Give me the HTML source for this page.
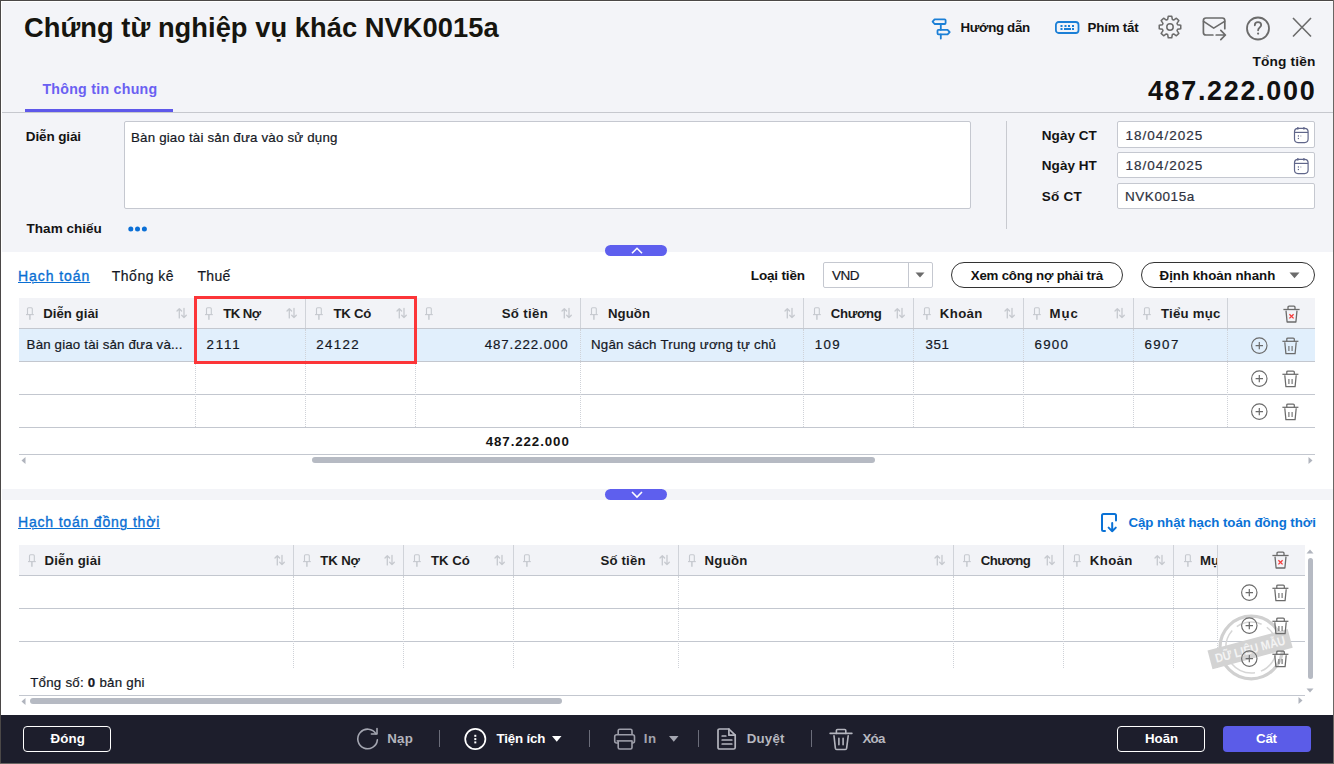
<!DOCTYPE html>
<html><head><meta charset="utf-8">
<style>
*{box-sizing:border-box;margin:0;padding:0}
html,body{width:1334px;height:764px;overflow:hidden;background:#fff;font-family:"Liberation Sans",sans-serif;color:#1f1f1f}
.a{position:absolute;white-space:nowrap;line-height:1}
svg.a{overflow:visible}
.u{text-decoration:underline;text-underline-offset:1px;text-decoration-thickness:1px;-webkit-text-stroke:0.35px #0a6fd3}
</style></head><body>

<div class="a" style="left:0px;top:0px;width:1334px;height:252px;background:#f3f4f8;"></div>
<div class="a " id="t0" style="top:13.89px;font-size:27.3px;color:#16150f;letter-spacing:0.039px;font-weight:bold;left:24.00px;">Chứng từ nghiệp vụ khác NVK0015a</div>
<div class="a " id="t1" style="top:81.98px;font-size:14.2px;color:#6a60f2;letter-spacing:0.265px;font-weight:bold;left:42.40px;">Thông tin chung</div>
<div class="a" style="left:25px;top:109px;width:148px;height:3px;background:#5e58ea;"></div>
<div class="a" style="left:0px;top:112px;width:1334px;height:1px;background:#c6c8ce;"></div>
<svg class="a" style="left:930px;top:17px;" width="22" height="23" viewBox="0 0 22 23" fill="none"><g stroke="#1b7fd6" stroke-width="1.8" stroke-linejoin="round" stroke-linecap="round" fill="none">
<path d="M2.6 4.65 L4.6 2.3 H14.6 Q15.6 2.3 15.6 3.3 V6 Q15.6 7 14.6 7 H4.6 Z"/>
<path d="M8.5 12.8 H17.6 L19.7 15.05 L17.6 17.3 H8.5 Q7.5 17.3 7.5 16.3 V13.8 Q7.5 12.8 8.5 12.8 Z"/>
<path d="M10.8 7 V12.8 M10.8 17.3 V21.6"/></g></svg>
<div class="a " id="t2" style="top:20.74px;font-size:13.3px;color:#131313;letter-spacing:-0.350px;font-weight:bold;left:960.60px;">Hướng dẫn</div>
<svg class="a" style="left:1054px;top:20px;" width="27" height="15" viewBox="0 0 27 15" fill="none"><rect x="1.9" y="2" width="22.6" height="11" rx="2.8" stroke="#1b7fd6" stroke-width="1.8"/>
<g fill="#1b7fd6"><rect x="6.5" y="5" width="2" height="2"/><rect x="10.5" y="5" width="2" height="2"/><rect x="14" y="5" width="2" height="2"/><rect x="18" y="5" width="2" height="2"/>
<rect x="6.5" y="8" width="2" height="2"/><rect x="10" y="8" width="7" height="2"/><rect x="18" y="8" width="2" height="2"/></g></svg>
<div class="a " id="t3" style="top:20.74px;font-size:13.3px;color:#131313;letter-spacing:-0.199px;font-weight:bold;left:1087.60px;">Phím tắt</div>
<svg class="a" style="left:1158px;top:15.3px;" width="24" height="24" viewBox="0 0 24 24" fill="none"><polygon points="10.26,1.24 13.74,1.24 14.33,4.45 15.69,5.01 18.38,3.16 20.84,5.62 18.99,8.31 19.55,9.67 22.76,10.26 22.76,13.74 19.55,14.33 18.99,15.69 20.84,18.38 18.38,20.84 15.69,18.99 14.33,19.55 13.74,22.76 10.26,22.76 9.67,19.55 8.31,18.99 5.62,20.84 3.16,18.38 5.01,15.69 4.45,14.33 1.24,13.74 1.24,10.26 4.45,9.67 5.01,8.31 3.16,5.62 5.62,3.16 8.31,5.01 9.67,4.45" stroke="#6b6b6b" stroke-width="1.5" stroke-linejoin="round"/>
<circle cx="12" cy="12" r="3.2" stroke="#6b6b6b" stroke-width="1.5"/></svg>
<svg class="a" style="left:1202px;top:16px;" width="26" height="26" viewBox="0 0 26 26" fill="none"><g stroke="#6b6b6b" stroke-width="1.7" stroke-linecap="round" stroke-linejoin="round" fill="none">
<path d="M10.9 19 H4 Q1.4 19 1.4 16.5 V4.5 Q1.4 2 4 2 H20.3 Q22.8 2 22.8 4.5 V12.7"/>
<path d="M1.6 5.4 L11.7 12.1 L22.6 5.4"/>
<path d="M14.2 19 H23.4 M18.8 14.4 L23.4 19 L18.8 23.6"/></g></svg>
<svg class="a" style="left:1246px;top:16px;" width="25" height="25" viewBox="0 0 25 25" fill="none"><circle cx="12" cy="12.5" r="11" stroke="#6b6b6b" stroke-width="1.8"/>
<path d="M8.8 9.3 C8.8 7.3 10.3 6.2 12 6.2 C13.8 6.2 15.2 7.4 15.2 9.1 C15.2 11.3 12.1 11.6 12.1 14.3" stroke="#6b6b6b" stroke-width="1.8" stroke-linecap="round"/>
<circle cx="12.1" cy="17.6" r="1.1" fill="#6b6b6b"/></svg>
<svg class="a" style="left:1292px;top:17px;" width="20" height="21" viewBox="0 0 20 21" fill="none"><path d="M1 1 L19 19.5 M19 1 L1 19.5" stroke="#6b6b6b" stroke-width="1.6"/></svg>
<div class="a " id="t4" style="top:55.40px;font-size:13.7px;color:#131313;letter-spacing:0.164px;font-weight:bold;right:18.56px;">Tổng tiền</div>
<div class="a " id="t5" style="top:78.14px;font-size:27px;color:#111;letter-spacing:1.660px;font-weight:bold;right:17.66px;">487.222.000</div>
<div class="a " id="t6" style="top:129.57px;font-size:13.5px;color:#131313;letter-spacing:-0.125px;font-weight:bold;left:25.80px;">Diễn giải</div>
<div class="a" style="left:124px;top:121px;width:847px;height:88px;background:#fff;border:1px solid #c5c8d0;border-radius:2px"></div>
<div class="a " id="t7" style="top:130.74px;font-size:13.3px;color:#141824;letter-spacing:0.194px;-webkit-text-stroke:0.2px #141824;left:131.00px;">Bàn giao tài sản đưa vào sử dụng</div>
<div class="a " id="t8" style="top:221.57px;font-size:13.5px;color:#131313;letter-spacing:0.012px;font-weight:bold;left:26.60px;">Tham chiếu</div>
<svg class="a" style="left:127px;top:226px;" width="22" height="6" viewBox="0 0 22 6" fill="none"><g fill="#0a6fd6"><circle cx="3.8" cy="3.1" r="2.5"/><circle cx="10.5" cy="3.1" r="2.5"/><circle cx="17.4" cy="3.1" r="2.5"/></g></svg>
<div class="a" style="left:1006px;top:121px;width:1px;height:108px;background:#c8cad0;"></div>
<div class="a " id="t9" style="top:128.57px;font-size:13.5px;color:#131313;letter-spacing:0.051px;font-weight:bold;left:1041.80px;">Ngày CT</div>
<div class="a " id="t10" style="top:158.57px;font-size:13.5px;color:#131313;letter-spacing:0.051px;font-weight:bold;left:1041.80px;">Ngày HT</div>
<div class="a " id="t11" style="top:189.57px;font-size:13.5px;color:#131313;letter-spacing:0.225px;font-weight:bold;left:1041.80px;">Số CT</div>
<div class="a" style="left:1117px;top:121px;width:198px;height:27px;background:#fff;border:1px solid #c5c8d0;border-radius:2px"></div>
<div class="a" style="left:1117px;top:152px;width:198px;height:26px;background:#fff;border:1px solid #c5c8d0;border-radius:2px"></div>
<div class="a" style="left:1117px;top:183px;width:198px;height:26px;background:#fff;border:1px solid #c5c8d0;border-radius:2px"></div>
<div class="a " id="t12" style="top:128.57px;font-size:13.5px;color:#2e3240;letter-spacing:1.045px;-webkit-text-stroke:0.2px #2e3240;left:1125.40px;">18/04/2025</div>
<div class="a " id="t13" style="top:158.57px;font-size:13.5px;color:#2e3240;letter-spacing:1.045px;-webkit-text-stroke:0.2px #2e3240;left:1125.40px;">18/04/2025</div>
<div class="a " id="t14" style="top:189.57px;font-size:13.5px;color:#2e3240;letter-spacing:0.558px;-webkit-text-stroke:0.2px #2e3240;left:1125.00px;">NVK0015a</div>
<svg class="a" style="left:1293px;top:127px;" width="16" height="16" viewBox="0 0 16 16" fill="none"><g stroke="#60668a" stroke-width="1.2" fill="none"><rect x="1.5" y="1.3" width="13.6" height="14.3" rx="3.5"/><path d="M1.5 5.4 H15.1"/><path d="M4.8 0.3 V2.4 M10.9 0.3 V2.4" stroke-width="1.6"/></g>
<g fill="#60668a"><rect x="4.8" y="8.3" width="1.2" height="1.3"/><rect x="7.2" y="8.4" width="1.2" height="1.2" opacity="0.5"/><rect x="4.8" y="10.9" width="1.2" height="1.2"/></g></svg>
<svg class="a" style="left:1293px;top:158px;" width="16" height="16" viewBox="0 0 16 16" fill="none"><g stroke="#60668a" stroke-width="1.2" fill="none"><rect x="1.5" y="1.3" width="13.6" height="14.3" rx="3.5"/><path d="M1.5 5.4 H15.1"/><path d="M4.8 0.3 V2.4 M10.9 0.3 V2.4" stroke-width="1.6"/></g>
<g fill="#60668a"><rect x="4.8" y="8.3" width="1.2" height="1.3"/><rect x="7.2" y="8.4" width="1.2" height="1.2" opacity="0.5"/><rect x="4.8" y="10.9" width="1.2" height="1.2"/></g></svg>
<div class="a" style="left:605px;top:245px;width:62px;height:11px;background:#5e5fee;border-radius:5.5px"></div>
<svg class="a" style="left:630px;top:246px;" width="14" height="9" viewBox="0 0 14 9" fill="none"><path d="M2 7.3 L7 2.3 L12 7.3" stroke="#fff" stroke-width="1.6"/></svg>
<div class="a u" id="t15" style="top:269.15px;font-size:14px;color:#0a6fd3;letter-spacing:0.925px;left:18.00px;">Hạch toán</div>
<div class="a " id="t16" style="top:269.15px;font-size:14px;color:#141824;letter-spacing:0.485px;-webkit-text-stroke:0.2px #141824;left:111.80px;">Thống kê</div>
<div class="a " id="t17" style="top:269.15px;font-size:14px;color:#141824;letter-spacing:0.333px;-webkit-text-stroke:0.2px #141824;left:197.40px;">Thuế</div>
<div class="a " id="t18" style="top:268.57px;font-size:13.5px;color:#131313;letter-spacing:-0.164px;font-weight:bold;left:750.80px;">Loại tiền</div>
<div class="a" style="left:823px;top:262px;width:110px;height:26px;background:#fff;border:1px solid #c5c8d0;border-radius:2px"></div>
<div class="a" style="left:908px;top:263px;width:1px;height:24px;background:#c5c8d0;"></div>
<div class="a " id="t19" style="top:268.57px;font-size:13.5px;color:#141824;letter-spacing:-0.450px;-webkit-text-stroke:0.2px #141824;left:832.00px;">VND</div>
<svg class="a" style="left:915px;top:272px;" width="10" height="6" viewBox="0 0 10 6" fill="none"><path d="M0.5 0.5 H9.5 L5 5.5 Z" fill="#6b6b6b"/></svg>
<div class="a" style="left:951px;top:262px;width:172px;height:26px;background:#fff;border:1px solid #333;border-radius:13px"></div>
<div class="a " id="t20" style="top:268.74px;font-size:13.3px;color:#131313;letter-spacing:-0.221px;font-weight:bold;left:970.80px;">Xem công nợ phải trả</div>
<div class="a" style="left:1141px;top:262px;width:174px;height:26px;background:#fff;border:1px solid #333;border-radius:13px"></div>
<div class="a " id="t21" style="top:268.74px;font-size:13.3px;color:#131313;letter-spacing:-0.020px;font-weight:bold;left:1159.60px;">Định khoản nhanh</div>
<svg class="a" style="left:1289px;top:272px;" width="11" height="7" viewBox="0 0 11 7" fill="none"><path d="M0.5 0.5 H10.5 L5.5 6.3 Z" fill="#6b6b6b"/></svg>
<div class="a" style="left:19px;top:298px;width:1296px;height:30px;background:#f2f3f7;"></div>
<div class="a" style="left:19px;top:329px;width:1296px;height:32px;background:#e1effc;"></div>
<div class="a" style="left:19px;top:328px;width:1296px;height:1px;background:#c3c7cf;"></div>
<div class="a" style="left:19px;top:361px;width:1296px;height:1px;background:#c3c7cf;"></div>
<div class="a" style="left:19px;top:394px;width:1296px;height:1px;background:#c3c7cf;"></div>
<div class="a" style="left:19px;top:427px;width:1296px;height:1px;background:#c3c7cf;"></div>
<div class="a" style="left:19px;top:454px;width:1296px;height:1px;background:#c3c7cf;"></div>
<div class="a" style="left:195px;top:298px;width:1px;height:30px;background:#d0d3d9;"></div>
<div class="a" style="left:195px;top:329px;height:98px;border-left:1px dotted #cfd2d8"></div>
<div class="a" style="left:305px;top:298px;width:1px;height:30px;background:#d0d3d9;"></div>
<div class="a" style="left:305px;top:329px;height:98px;border-left:1px dotted #cfd2d8"></div>
<div class="a" style="left:415px;top:298px;width:1px;height:30px;background:#d0d3d9;"></div>
<div class="a" style="left:415px;top:329px;height:98px;border-left:1px dotted #cfd2d8"></div>
<div class="a" style="left:580px;top:298px;width:1px;height:30px;background:#d0d3d9;"></div>
<div class="a" style="left:580px;top:329px;height:98px;border-left:1px dotted #cfd2d8"></div>
<div class="a" style="left:803px;top:298px;width:1px;height:30px;background:#d0d3d9;"></div>
<div class="a" style="left:803px;top:329px;height:98px;border-left:1px dotted #cfd2d8"></div>
<div class="a" style="left:913px;top:298px;width:1px;height:30px;background:#d0d3d9;"></div>
<div class="a" style="left:913px;top:329px;height:98px;border-left:1px dotted #cfd2d8"></div>
<div class="a" style="left:1023px;top:298px;width:1px;height:30px;background:#d0d3d9;"></div>
<div class="a" style="left:1023px;top:329px;height:98px;border-left:1px dotted #cfd2d8"></div>
<div class="a" style="left:1133px;top:298px;width:1px;height:30px;background:#d0d3d9;"></div>
<div class="a" style="left:1133px;top:329px;height:98px;border-left:1px dotted #cfd2d8"></div>
<div class="a" style="left:1227px;top:298px;width:1px;height:30px;background:#d0d3d9;"></div>
<div class="a" style="left:1227px;top:329px;height:98px;border-left:1px dotted #cfd2d8"></div>
<div class="a " id="t22" style="top:306.83px;font-size:13.2px;color:#1c1c1c;letter-spacing:0.039px;font-weight:bold;left:43.20px;">Diễn giải</div>
<svg class="a" style="left:25.9px;top:307px;" width="9" height="12" viewBox="0 0 9 12" fill="none"><g stroke="#c6c9cf" fill="none"><path d="M1.5 7.3 V1.8 Q1.5 0.8 2.5 0.8 H5.3 Q6.3 0.8 6.3 1.8 V7.3" stroke-width="1.1"/><path d="M0 7.6 H7.8" stroke-width="1.1"/><path d="M3.9 7.8 V12.7" stroke-width="1.5"/></g></svg>
<svg class="a" style="left:175.8px;top:308px;" width="11" height="11" viewBox="0 0 11 11" fill="none"><g stroke="#c6c9cf" stroke-width="1.3" fill="none" stroke-linecap="round" stroke-linejoin="round"><path d="M3.3 9.9 V0.7 M1 3 L3.3 0.7 L5.6 3"/><path d="M8 0.3 V9.6 M5.7 7.3 L8 9.6 L10.3 7.3"/></g></svg>
<div class="a " id="t23" style="top:306.83px;font-size:13.2px;color:#1c1c1c;letter-spacing:-0.525px;font-weight:bold;left:223.20px;">TK Nợ</div>
<svg class="a" style="left:204.7px;top:307px;" width="9" height="12" viewBox="0 0 9 12" fill="none"><g stroke="#c6c9cf" fill="none"><path d="M1.5 7.3 V1.8 Q1.5 0.8 2.5 0.8 H5.3 Q6.3 0.8 6.3 1.8 V7.3" stroke-width="1.1"/><path d="M0 7.6 H7.8" stroke-width="1.1"/><path d="M3.9 7.8 V12.7" stroke-width="1.5"/></g></svg>
<svg class="a" style="left:285.8px;top:308px;" width="11" height="11" viewBox="0 0 11 11" fill="none"><g stroke="#c6c9cf" stroke-width="1.3" fill="none" stroke-linecap="round" stroke-linejoin="round"><path d="M3.3 9.9 V0.7 M1 3 L3.3 0.7 L5.6 3"/><path d="M8 0.3 V9.6 M5.7 7.3 L8 9.6 L10.3 7.3"/></g></svg>
<div class="a " id="t24" style="top:306.83px;font-size:13.2px;color:#1c1c1c;letter-spacing:-0.275px;font-weight:bold;left:333.60px;">TK Có</div>
<svg class="a" style="left:314.7px;top:307px;" width="9" height="12" viewBox="0 0 9 12" fill="none"><g stroke="#c6c9cf" fill="none"><path d="M1.5 7.3 V1.8 Q1.5 0.8 2.5 0.8 H5.3 Q6.3 0.8 6.3 1.8 V7.3" stroke-width="1.1"/><path d="M0 7.6 H7.8" stroke-width="1.1"/><path d="M3.9 7.8 V12.7" stroke-width="1.5"/></g></svg>
<svg class="a" style="left:395.8px;top:308px;" width="11" height="11" viewBox="0 0 11 11" fill="none"><g stroke="#c6c9cf" stroke-width="1.3" fill="none" stroke-linecap="round" stroke-linejoin="round"><path d="M3.3 9.9 V0.7 M1 3 L3.3 0.7 L5.6 3"/><path d="M8 0.3 V9.6 M5.7 7.3 L8 9.6 L10.3 7.3"/></g></svg>
<div class="a " id="t25" style="top:306.83px;font-size:13.2px;color:#1c1c1c;letter-spacing:0.366px;font-weight:bold;right:785.77px;">Số tiền</div>
<svg class="a" style="left:424.7px;top:307px;" width="9" height="12" viewBox="0 0 9 12" fill="none"><g stroke="#c6c9cf" fill="none"><path d="M1.5 7.3 V1.8 Q1.5 0.8 2.5 0.8 H5.3 Q6.3 0.8 6.3 1.8 V7.3" stroke-width="1.1"/><path d="M0 7.6 H7.8" stroke-width="1.1"/><path d="M3.9 7.8 V12.7" stroke-width="1.5"/></g></svg>
<svg class="a" style="left:561.3px;top:308px;" width="11" height="11" viewBox="0 0 11 11" fill="none"><g stroke="#c6c9cf" stroke-width="1.3" fill="none" stroke-linecap="round" stroke-linejoin="round"><path d="M3.3 9.9 V0.7 M1 3 L3.3 0.7 L5.6 3"/><path d="M8 0.3 V9.6 M5.7 7.3 L8 9.6 L10.3 7.3"/></g></svg>
<div class="a " id="t26" style="top:306.83px;font-size:13.2px;color:#1c1c1c;letter-spacing:0.050px;font-weight:bold;left:608.00px;">Nguồn</div>
<svg class="a" style="left:590.2px;top:307px;" width="9" height="12" viewBox="0 0 9 12" fill="none"><g stroke="#c6c9cf" fill="none"><path d="M1.5 7.3 V1.8 Q1.5 0.8 2.5 0.8 H5.3 Q6.3 0.8 6.3 1.8 V7.3" stroke-width="1.1"/><path d="M0 7.6 H7.8" stroke-width="1.1"/><path d="M3.9 7.8 V12.7" stroke-width="1.5"/></g></svg>
<svg class="a" style="left:784.3px;top:308px;" width="11" height="11" viewBox="0 0 11 11" fill="none"><g stroke="#c6c9cf" stroke-width="1.3" fill="none" stroke-linecap="round" stroke-linejoin="round"><path d="M3.3 9.9 V0.7 M1 3 L3.3 0.7 L5.6 3"/><path d="M8 0.3 V9.6 M5.7 7.3 L8 9.6 L10.3 7.3"/></g></svg>
<div class="a " id="t27" style="top:306.83px;font-size:13.2px;color:#1c1c1c;letter-spacing:-0.320px;font-weight:bold;left:830.80px;">Chương</div>
<svg class="a" style="left:813.2px;top:307px;" width="9" height="12" viewBox="0 0 9 12" fill="none"><g stroke="#c6c9cf" fill="none"><path d="M1.5 7.3 V1.8 Q1.5 0.8 2.5 0.8 H5.3 Q6.3 0.8 6.3 1.8 V7.3" stroke-width="1.1"/><path d="M0 7.6 H7.8" stroke-width="1.1"/><path d="M3.9 7.8 V12.7" stroke-width="1.5"/></g></svg>
<svg class="a" style="left:894.3px;top:308px;" width="11" height="11" viewBox="0 0 11 11" fill="none"><g stroke="#c6c9cf" stroke-width="1.3" fill="none" stroke-linecap="round" stroke-linejoin="round"><path d="M3.3 9.9 V0.7 M1 3 L3.3 0.7 L5.6 3"/><path d="M8 0.3 V9.6 M5.7 7.3 L8 9.6 L10.3 7.3"/></g></svg>
<div class="a " id="t28" style="top:306.83px;font-size:13.2px;color:#1c1c1c;letter-spacing:0.375px;font-weight:bold;left:939.80px;">Khoản</div>
<svg class="a" style="left:923.2px;top:307px;" width="9" height="12" viewBox="0 0 9 12" fill="none"><g stroke="#c6c9cf" fill="none"><path d="M1.5 7.3 V1.8 Q1.5 0.8 2.5 0.8 H5.3 Q6.3 0.8 6.3 1.8 V7.3" stroke-width="1.1"/><path d="M0 7.6 H7.8" stroke-width="1.1"/><path d="M3.9 7.8 V12.7" stroke-width="1.5"/></g></svg>
<svg class="a" style="left:1004.3px;top:308px;" width="11" height="11" viewBox="0 0 11 11" fill="none"><g stroke="#c6c9cf" stroke-width="1.3" fill="none" stroke-linecap="round" stroke-linejoin="round"><path d="M3.3 9.9 V0.7 M1 3 L3.3 0.7 L5.6 3"/><path d="M8 0.3 V9.6 M5.7 7.3 L8 9.6 L10.3 7.3"/></g></svg>
<div class="a " id="t29" style="top:306.83px;font-size:13.2px;color:#1c1c1c;letter-spacing:0.950px;font-weight:bold;left:1049.60px;">Mục</div>
<svg class="a" style="left:1033.2px;top:307px;" width="9" height="12" viewBox="0 0 9 12" fill="none"><g stroke="#c6c9cf" fill="none"><path d="M1.5 7.3 V1.8 Q1.5 0.8 2.5 0.8 H5.3 Q6.3 0.8 6.3 1.8 V7.3" stroke-width="1.1"/><path d="M0 7.6 H7.8" stroke-width="1.1"/><path d="M3.9 7.8 V12.7" stroke-width="1.5"/></g></svg>
<svg class="a" style="left:1114.3px;top:308px;" width="11" height="11" viewBox="0 0 11 11" fill="none"><g stroke="#c6c9cf" stroke-width="1.3" fill="none" stroke-linecap="round" stroke-linejoin="round"><path d="M3.3 9.9 V0.7 M1 3 L3.3 0.7 L5.6 3"/><path d="M8 0.3 V9.6 M5.7 7.3 L8 9.6 L10.3 7.3"/></g></svg>
<div class="a " id="t30" style="top:306.83px;font-size:13.2px;color:#1c1c1c;letter-spacing:0.243px;font-weight:bold;left:1161.00px;">Tiểu mục</div>
<svg class="a" style="left:1143.2px;top:307px;" width="9" height="12" viewBox="0 0 9 12" fill="none"><g stroke="#c6c9cf" fill="none"><path d="M1.5 7.3 V1.8 Q1.5 0.8 2.5 0.8 H5.3 Q6.3 0.8 6.3 1.8 V7.3" stroke-width="1.1"/><path d="M0 7.6 H7.8" stroke-width="1.1"/><path d="M3.9 7.8 V12.7" stroke-width="1.5"/></g></svg>
<svg class="a" style="left:1282.5px;top:304.8px;" width="17" height="18" viewBox="0 0 17 18" fill="none"><g stroke="#6b6b6b" stroke-width="1.3" fill="none" stroke-linejoin="round"><path d="M0.4 4.5 H16.6"/><path d="M5 4.5 V2.3 Q5 1.2 6.1 1.2 H10.9 Q12 1.2 12 2.3 V4.5"/><path d="M3 5.6 L4.1 17 H12.9 L14 5.6"/></g>
<path d="M6.4 9.2 L10.6 13.4 M10.6 9.2 L6.4 13.4" stroke="#f53a3a" stroke-width="1.3"/></svg>
<div class="a " id="t31" style="top:337.74px;font-size:13.3px;color:#141824;letter-spacing:0.168px;-webkit-text-stroke:0.2px #141824;left:26.60px;">Bàn giao tài sản đưa và...</div>
<div class="a " id="t32" style="top:337.74px;font-size:13.3px;color:#141824;letter-spacing:1.900px;-webkit-text-stroke:0.2px #141824;left:206.40px;">2111</div>
<div class="a " id="t33" style="top:337.74px;font-size:13.3px;color:#141824;letter-spacing:1.350px;-webkit-text-stroke:0.2px #141824;left:316.20px;">24122</div>
<div class="a " id="t34" style="top:337.74px;font-size:13.3px;color:#141824;letter-spacing:0.910px;-webkit-text-stroke:0.2px #141824;right:765.41px;">487.222.000</div>
<div class="a " id="t35" style="top:337.74px;font-size:13.3px;color:#141824;letter-spacing:0.238px;-webkit-text-stroke:0.2px #141824;left:591.00px;">Ngân sách Trung ương tự chủ</div>
<div class="a " id="t36" style="top:337.74px;font-size:13.3px;color:#141824;letter-spacing:1.300px;-webkit-text-stroke:0.2px #141824;left:814.80px;">109</div>
<div class="a " id="t37" style="top:337.74px;font-size:13.3px;color:#141824;letter-spacing:0.700px;-webkit-text-stroke:0.2px #141824;left:925.40px;">351</div>
<div class="a " id="t38" style="top:337.74px;font-size:13.3px;color:#141824;letter-spacing:1.234px;-webkit-text-stroke:0.2px #141824;left:1034.60px;">6900</div>
<div class="a " id="t39" style="top:337.74px;font-size:13.3px;color:#141824;letter-spacing:1.366px;-webkit-text-stroke:0.2px #141824;left:1144.60px;">6907</div>
<svg class="a" style="left:1250px;top:337px;" width="18" height="18" viewBox="0 0 18 18" fill="none"><circle cx="9.3" cy="8.6" r="7.7" stroke="#6b6b6b" stroke-width="1.15"/><path d="M5.6 8.6 H13 M9.3 4.9 V12.3" stroke="#6b6b6b" stroke-width="1.2"/></svg>
<svg class="a" style="left:1281.5px;top:336.5px;" width="17" height="18" viewBox="0 0 17 18" fill="none"><g stroke="#6b6b6b" stroke-width="1.25" fill="none" stroke-linejoin="round"><path d="M0.4 4.3 H16.4"/><path d="M4.8 4.3 V2.1 Q4.8 1 5.9 1 H11.2 Q12.3 1 12.3 2.1 V4.3"/><path d="M2.8 5.3 L3.9 16.6 H13.1 L14.2 5.3"/><path d="M6.9 8.9 V14 M10.1 8.9 V14" stroke-width="1.1"/></g></svg>
<svg class="a" style="left:1250px;top:370px;" width="18" height="18" viewBox="0 0 18 18" fill="none"><circle cx="9.3" cy="8.6" r="7.7" stroke="#6b6b6b" stroke-width="1.15"/><path d="M5.6 8.6 H13 M9.3 4.9 V12.3" stroke="#6b6b6b" stroke-width="1.2"/></svg>
<svg class="a" style="left:1281.5px;top:369.5px;" width="17" height="18" viewBox="0 0 17 18" fill="none"><g stroke="#6b6b6b" stroke-width="1.25" fill="none" stroke-linejoin="round"><path d="M0.4 4.3 H16.4"/><path d="M4.8 4.3 V2.1 Q4.8 1 5.9 1 H11.2 Q12.3 1 12.3 2.1 V4.3"/><path d="M2.8 5.3 L3.9 16.6 H13.1 L14.2 5.3"/><path d="M6.9 8.9 V14 M10.1 8.9 V14" stroke-width="1.1"/></g></svg>
<svg class="a" style="left:1250px;top:403px;" width="18" height="18" viewBox="0 0 18 18" fill="none"><circle cx="9.3" cy="8.6" r="7.7" stroke="#6b6b6b" stroke-width="1.15"/><path d="M5.6 8.6 H13 M9.3 4.9 V12.3" stroke="#6b6b6b" stroke-width="1.2"/></svg>
<svg class="a" style="left:1281.5px;top:402.5px;" width="17" height="18" viewBox="0 0 17 18" fill="none"><g stroke="#6b6b6b" stroke-width="1.25" fill="none" stroke-linejoin="round"><path d="M0.4 4.3 H16.4"/><path d="M4.8 4.3 V2.1 Q4.8 1 5.9 1 H11.2 Q12.3 1 12.3 2.1 V4.3"/><path d="M2.8 5.3 L3.9 16.6 H13.1 L14.2 5.3"/><path d="M6.9 8.9 V14 M10.1 8.9 V14" stroke-width="1.1"/></g></svg>
<div class="a " id="t40" style="top:434.74px;font-size:13.3px;color:#131313;letter-spacing:0.910px;font-weight:bold;right:764.31px;">487.222.000</div>
<div class="a" style="left:312px;top:457px;width:563px;height:6px;background:#b6bac3;border-radius:3px"></div>
<svg class="a" style="left:21px;top:457px;" width="5" height="7" viewBox="0 0 5 7" fill="none"><path d="M4.5 0 V7 L0.5 3.5 Z" fill="#b0b4bd"/></svg>
<svg class="a" style="left:1308px;top:457px;" width="5" height="7" viewBox="0 0 5 7" fill="none"><path d="M0.5 0 V7 L4.5 3.5 Z" fill="#b0b4bd"/></svg>
<div class="a" style="left:194px;top:296px;width:223px;height:68px;background:none;border:3px solid #fc3538"></div>
<div class="a" style="left:0px;top:489px;width:1334px;height:11px;background:#f3f4f8;"></div>
<div class="a" style="left:605px;top:489px;width:62px;height:11px;background:#5e5fee;border-radius:5.5px"></div>
<svg class="a" style="left:630px;top:489.6px;" width="14" height="9" viewBox="0 0 14 9" fill="none"><path d="M2 2 L7 7 L12 2" stroke="#fff" stroke-width="1.6"/></svg>
<div class="a u" id="t41" style="top:515.15px;font-size:14px;color:#0a6fd3;letter-spacing:0.811px;left:18.00px;">Hạch toán đồng thời</div>
<svg class="a" style="left:1100px;top:512px;" width="18" height="21" viewBox="0 0 18 21" fill="none"><g stroke="#0a72d6" stroke-width="2" fill="none" stroke-linecap="round" stroke-linejoin="round">
<path d="M5 19 H3.5 Q2 19 2 17.5 V3.5 Q2 2 3.5 2 H14.5 Q16 2 16 3.5 V8.5"/>
<path d="M12.2 11 V19.2 M8.6 15.6 L12.2 19.2 L15.8 15.6"/></g></svg>
<div class="a " id="t42" style="top:515.74px;font-size:13.3px;color:#0a72d6;letter-spacing:-0.053px;font-weight:bold;left:1128.40px;">Cập nhật hạch toán đồng thời</div>
<div class="a" style="left:19px;top:545px;width:1286px;height:30px;background:#f2f3f7;"></div>
<div class="a" style="left:19px;top:575px;width:1286px;height:1px;background:#c3c7cf;"></div>
<div class="a" style="left:19px;top:608px;width:1286px;height:1px;background:#c3c7cf;"></div>
<div class="a" style="left:19px;top:641px;width:1286px;height:1px;background:#c3c7cf;"></div>
<div class="a" style="left:19px;top:695px;width:1286px;height:1px;background:#c3c7cf;"></div>
<div class="a" style="left:293px;top:545px;width:1px;height:30px;background:#d0d3d9;"></div>
<div class="a" style="left:293px;top:576px;height:92px;border-left:1px dotted #cfd2d8"></div>
<div class="a" style="left:403px;top:545px;width:1px;height:30px;background:#d0d3d9;"></div>
<div class="a" style="left:403px;top:576px;height:92px;border-left:1px dotted #cfd2d8"></div>
<div class="a" style="left:513px;top:545px;width:1px;height:30px;background:#d0d3d9;"></div>
<div class="a" style="left:513px;top:576px;height:92px;border-left:1px dotted #cfd2d8"></div>
<div class="a" style="left:678px;top:545px;width:1px;height:30px;background:#d0d3d9;"></div>
<div class="a" style="left:678px;top:576px;height:92px;border-left:1px dotted #cfd2d8"></div>
<div class="a" style="left:953px;top:545px;width:1px;height:30px;background:#d0d3d9;"></div>
<div class="a" style="left:953px;top:576px;height:92px;border-left:1px dotted #cfd2d8"></div>
<div class="a" style="left:1063px;top:545px;width:1px;height:30px;background:#d0d3d9;"></div>
<div class="a" style="left:1063px;top:576px;height:92px;border-left:1px dotted #cfd2d8"></div>
<div class="a" style="left:1173px;top:545px;width:1px;height:30px;background:#d0d3d9;"></div>
<div class="a" style="left:1173px;top:576px;height:92px;border-left:1px dotted #cfd2d8"></div>
<div class="a" style="left:1217px;top:545px;width:1px;height:30px;background:#d0d3d9;"></div>
<div class="a" style="left:1217px;top:576px;height:92px;border-left:1px dotted #cfd2d8"></div>
<div class="a " id="t43" style="top:553.83px;font-size:13.2px;color:#1c1c1c;letter-spacing:0.164px;font-weight:bold;left:44.60px;">Diễn giải</div>
<svg class="a" style="left:28.1px;top:554px;" width="9" height="12" viewBox="0 0 9 12" fill="none"><g stroke="#c6c9cf" fill="none"><path d="M1.5 7.3 V1.8 Q1.5 0.8 2.5 0.8 H5.3 Q6.3 0.8 6.3 1.8 V7.3" stroke-width="1.1"/><path d="M0 7.6 H7.8" stroke-width="1.1"/><path d="M3.9 7.8 V12.7" stroke-width="1.5"/></g></svg>
<svg class="a" style="left:274.3px;top:555px;" width="11" height="11" viewBox="0 0 11 11" fill="none"><g stroke="#c6c9cf" stroke-width="1.3" fill="none" stroke-linecap="round" stroke-linejoin="round"><path d="M3.3 9.9 V0.7 M1 3 L3.3 0.7 L5.6 3"/><path d="M8 0.3 V9.6 M5.7 7.3 L8 9.6 L10.3 7.3"/></g></svg>
<div class="a " id="t44" style="top:553.83px;font-size:13.2px;color:#1c1c1c;letter-spacing:-0.100px;font-weight:bold;left:320.20px;">TK Nợ</div>
<svg class="a" style="left:303.2px;top:554px;" width="9" height="12" viewBox="0 0 9 12" fill="none"><g stroke="#c6c9cf" fill="none"><path d="M1.5 7.3 V1.8 Q1.5 0.8 2.5 0.8 H5.3 Q6.3 0.8 6.3 1.8 V7.3" stroke-width="1.1"/><path d="M0 7.6 H7.8" stroke-width="1.1"/><path d="M3.9 7.8 V12.7" stroke-width="1.5"/></g></svg>
<svg class="a" style="left:384.3px;top:555px;" width="11" height="11" viewBox="0 0 11 11" fill="none"><g stroke="#c6c9cf" stroke-width="1.3" fill="none" stroke-linecap="round" stroke-linejoin="round"><path d="M3.3 9.9 V0.7 M1 3 L3.3 0.7 L5.6 3"/><path d="M8 0.3 V9.6 M5.7 7.3 L8 9.6 L10.3 7.3"/></g></svg>
<div class="a " id="t45" style="top:553.83px;font-size:13.2px;color:#1c1c1c;letter-spacing:0.000px;font-weight:bold;left:431.00px;">TK Có</div>
<svg class="a" style="left:413.2px;top:554px;" width="9" height="12" viewBox="0 0 9 12" fill="none"><g stroke="#c6c9cf" fill="none"><path d="M1.5 7.3 V1.8 Q1.5 0.8 2.5 0.8 H5.3 Q6.3 0.8 6.3 1.8 V7.3" stroke-width="1.1"/><path d="M0 7.6 H7.8" stroke-width="1.1"/><path d="M3.9 7.8 V12.7" stroke-width="1.5"/></g></svg>
<svg class="a" style="left:494.3px;top:555px;" width="11" height="11" viewBox="0 0 11 11" fill="none"><g stroke="#c6c9cf" stroke-width="1.3" fill="none" stroke-linecap="round" stroke-linejoin="round"><path d="M3.3 9.9 V0.7 M1 3 L3.3 0.7 L5.6 3"/><path d="M8 0.3 V9.6 M5.7 7.3 L8 9.6 L10.3 7.3"/></g></svg>
<div class="a " id="t46" style="top:553.83px;font-size:13.2px;color:#1c1c1c;letter-spacing:0.167px;font-weight:bold;right:688.37px;">Số tiền</div>
<svg class="a" style="left:523.2px;top:554px;" width="9" height="12" viewBox="0 0 9 12" fill="none"><g stroke="#c6c9cf" fill="none"><path d="M1.5 7.3 V1.8 Q1.5 0.8 2.5 0.8 H5.3 Q6.3 0.8 6.3 1.8 V7.3" stroke-width="1.1"/><path d="M0 7.6 H7.8" stroke-width="1.1"/><path d="M3.9 7.8 V12.7" stroke-width="1.5"/></g></svg>
<svg class="a" style="left:659.3px;top:555px;" width="11" height="11" viewBox="0 0 11 11" fill="none"><g stroke="#c6c9cf" stroke-width="1.3" fill="none" stroke-linecap="round" stroke-linejoin="round"><path d="M3.3 9.9 V0.7 M1 3 L3.3 0.7 L5.6 3"/><path d="M8 0.3 V9.6 M5.7 7.3 L8 9.6 L10.3 7.3"/></g></svg>
<div class="a " id="t47" style="top:553.83px;font-size:13.2px;color:#1c1c1c;letter-spacing:0.250px;font-weight:bold;left:704.60px;">Nguồn</div>
<svg class="a" style="left:688.2px;top:554px;" width="9" height="12" viewBox="0 0 9 12" fill="none"><g stroke="#c6c9cf" fill="none"><path d="M1.5 7.3 V1.8 Q1.5 0.8 2.5 0.8 H5.3 Q6.3 0.8 6.3 1.8 V7.3" stroke-width="1.1"/><path d="M0 7.6 H7.8" stroke-width="1.1"/><path d="M3.9 7.8 V12.7" stroke-width="1.5"/></g></svg>
<svg class="a" style="left:934.3px;top:555px;" width="11" height="11" viewBox="0 0 11 11" fill="none"><g stroke="#c6c9cf" stroke-width="1.3" fill="none" stroke-linecap="round" stroke-linejoin="round"><path d="M3.3 9.9 V0.7 M1 3 L3.3 0.7 L5.6 3"/><path d="M8 0.3 V9.6 M5.7 7.3 L8 9.6 L10.3 7.3"/></g></svg>
<div class="a " id="t48" style="top:553.83px;font-size:13.2px;color:#1c1c1c;letter-spacing:-0.520px;font-weight:bold;left:980.80px;">Chương</div>
<svg class="a" style="left:963.2px;top:554px;" width="9" height="12" viewBox="0 0 9 12" fill="none"><g stroke="#c6c9cf" fill="none"><path d="M1.5 7.3 V1.8 Q1.5 0.8 2.5 0.8 H5.3 Q6.3 0.8 6.3 1.8 V7.3" stroke-width="1.1"/><path d="M0 7.6 H7.8" stroke-width="1.1"/><path d="M3.9 7.8 V12.7" stroke-width="1.5"/></g></svg>
<svg class="a" style="left:1044.3px;top:555px;" width="11" height="11" viewBox="0 0 11 11" fill="none"><g stroke="#c6c9cf" stroke-width="1.3" fill="none" stroke-linecap="round" stroke-linejoin="round"><path d="M3.3 9.9 V0.7 M1 3 L3.3 0.7 L5.6 3"/><path d="M8 0.3 V9.6 M5.7 7.3 L8 9.6 L10.3 7.3"/></g></svg>
<div class="a " id="t49" style="top:553.83px;font-size:13.2px;color:#1c1c1c;letter-spacing:0.375px;font-weight:bold;left:1089.80px;">Khoản</div>
<svg class="a" style="left:1073.2px;top:554px;" width="9" height="12" viewBox="0 0 9 12" fill="none"><g stroke="#c6c9cf" fill="none"><path d="M1.5 7.3 V1.8 Q1.5 0.8 2.5 0.8 H5.3 Q6.3 0.8 6.3 1.8 V7.3" stroke-width="1.1"/><path d="M0 7.6 H7.8" stroke-width="1.1"/><path d="M3.9 7.8 V12.7" stroke-width="1.5"/></g></svg>
<svg class="a" style="left:1154.3px;top:555px;" width="11" height="11" viewBox="0 0 11 11" fill="none"><g stroke="#c6c9cf" stroke-width="1.3" fill="none" stroke-linecap="round" stroke-linejoin="round"><path d="M3.3 9.9 V0.7 M1 3 L3.3 0.7 L5.6 3"/><path d="M8 0.3 V9.6 M5.7 7.3 L8 9.6 L10.3 7.3"/></g></svg>
<div class="a" style="left:1174px;top:545px;width:43px;height:30px;overflow:hidden">
<svg class="a" style="left:10px;top:9px;" width="9" height="12" viewBox="0 0 9 12" fill="none"><g stroke="#c6c9cf" fill="none"><path d="M1.5 7.3 V1.8 Q1.5 0.8 2.5 0.8 H5.3 Q6.3 0.8 6.3 1.8 V7.3" stroke-width="1.1"/><path d="M0 7.6 H7.8" stroke-width="1.1"/><path d="M3.9 7.8 V12.7" stroke-width="1.5"/></g></svg>
<div class="a" style="left:26px;top:8.83px;font-size:13.2px;font-weight:bold;color:#1c1c1c">Mục</div></div>
<svg class="a" style="left:1203px;top:598px" width="100" height="100" viewBox="0 0 100 100">
<g transform="translate(48.3,49.5)">
<circle r="31.3" fill="none" stroke="#d0d0d0" stroke-width="3.2"/>
<circle r="25.5" fill="none" stroke="#d6d6d6" stroke-width="1.5" stroke-dasharray="30 6 26 6"/>
<g transform="translate(-1.2,1.6) rotate(-15)"><rect x="-41.5" y="-9.7" width="83" height="19.4" fill="#d3d3d3"/>
<text x="0" y="4.6" text-anchor="middle" font-family="Liberation Sans" font-weight="bold" font-size="12.5" fill="#f4f4f4" textLength="72" lengthAdjust="spacingAndGlyphs">DỮ LIỆU MẪU</text></g>
</g></svg>
<svg class="a" style="left:1272px;top:551px;" width="17" height="18" viewBox="0 0 17 18" fill="none"><g stroke="#6b6b6b" stroke-width="1.3" fill="none" stroke-linejoin="round"><path d="M0.4 4.5 H16.6"/><path d="M5 4.5 V2.3 Q5 1.2 6.1 1.2 H10.9 Q12 1.2 12 2.3 V4.5"/><path d="M3 5.6 L4.1 17 H12.9 L14 5.6"/></g>
<path d="M6.4 9.2 L10.6 13.4 M10.6 9.2 L6.4 13.4" stroke="#f53a3a" stroke-width="1.3"/></svg>
<svg class="a" style="left:1240px;top:584px;" width="18" height="18" viewBox="0 0 18 18" fill="none"><circle cx="9.3" cy="8.6" r="7.7" stroke="#6b6b6b" stroke-width="1.15"/><path d="M5.6 8.6 H13 M9.3 4.9 V12.3" stroke="#6b6b6b" stroke-width="1.2"/></svg>
<svg class="a" style="left:1271.5px;top:583.5px;" width="17" height="18" viewBox="0 0 17 18" fill="none"><g stroke="#6b6b6b" stroke-width="1.25" fill="none" stroke-linejoin="round"><path d="M0.4 4.3 H16.4"/><path d="M4.8 4.3 V2.1 Q4.8 1 5.9 1 H11.2 Q12.3 1 12.3 2.1 V4.3"/><path d="M2.8 5.3 L3.9 16.6 H13.1 L14.2 5.3"/><path d="M6.9 8.9 V14 M10.1 8.9 V14" stroke-width="1.1"/></g></svg>
<svg class="a" style="left:1240px;top:617px;" width="18" height="18" viewBox="0 0 18 18" fill="none"><circle cx="9.3" cy="8.6" r="7.7" stroke="#6b6b6b" stroke-width="1.15"/><path d="M5.6 8.6 H13 M9.3 4.9 V12.3" stroke="#6b6b6b" stroke-width="1.2"/></svg>
<svg class="a" style="left:1271.5px;top:616.5px;" width="17" height="18" viewBox="0 0 17 18" fill="none"><g stroke="#6b6b6b" stroke-width="1.25" fill="none" stroke-linejoin="round"><path d="M0.4 4.3 H16.4"/><path d="M4.8 4.3 V2.1 Q4.8 1 5.9 1 H11.2 Q12.3 1 12.3 2.1 V4.3"/><path d="M2.8 5.3 L3.9 16.6 H13.1 L14.2 5.3"/><path d="M6.9 8.9 V14 M10.1 8.9 V14" stroke-width="1.1"/></g></svg>
<svg class="a" style="left:1240px;top:650px;" width="18" height="18" viewBox="0 0 18 18" fill="none"><circle cx="9.3" cy="8.6" r="7.7" stroke="#6b6b6b" stroke-width="1.15"/><path d="M5.6 8.6 H13 M9.3 4.9 V12.3" stroke="#6b6b6b" stroke-width="1.2"/></svg>
<svg class="a" style="left:1271.5px;top:649.5px;" width="17" height="18" viewBox="0 0 17 18" fill="none"><g stroke="#6b6b6b" stroke-width="1.25" fill="none" stroke-linejoin="round"><path d="M0.4 4.3 H16.4"/><path d="M4.8 4.3 V2.1 Q4.8 1 5.9 1 H11.2 Q12.3 1 12.3 2.1 V4.3"/><path d="M2.8 5.3 L3.9 16.6 H13.1 L14.2 5.3"/><path d="M6.9 8.9 V14 M10.1 8.9 V14" stroke-width="1.1"/></g></svg>
<div class="a " id="t50" style="top:675.74px;font-size:13.3px;color:#141824;letter-spacing:0.247px;-webkit-text-stroke:0.2px #141824;left:30.20px;">Tổng số: <b>0</b> bản ghi</div>
<div class="a" style="left:30px;top:698px;width:532px;height:6px;background:#b6bac3;border-radius:3px"></div>
<svg class="a" style="left:21px;top:698px;" width="5" height="7" viewBox="0 0 5 7" fill="none"><path d="M4.5 0 V7 L0.5 3.5 Z" fill="#b0b4bd"/></svg>
<svg class="a" style="left:1298px;top:697px;" width="5" height="7" viewBox="0 0 5 7" fill="none"><path d="M0.5 0 V7 L4.5 3.5 Z" fill="#b0b4bd"/></svg>
<div class="a" style="left:1307.5px;top:557.5px;width:5px;height:121px;background:#b6bac3;border-radius:2.5px"></div>
<svg class="a" style="left:1306px;top:549px;" width="8" height="5" viewBox="0 0 8 5" fill="none"><path d="M0.5 4.5 H7.5 L4 0.5 Z" fill="#b0b4bd"/></svg>
<svg class="a" style="left:1306px;top:688px;" width="8" height="5" viewBox="0 0 8 5" fill="none"><path d="M0.5 0.5 H7.5 L4 4.5 Z" fill="#b0b4bd"/></svg>
<div class="a" style="left:0px;top:715px;width:1334px;height:49px;background:#1d1e2c;"></div>
<div class="a" style="left:23px;top:726px;width:88px;height:26px;background:none;border:1px solid #fff;border-radius:4px"></div>
<div class="a " id="t51" style="top:731.74px;font-size:13.3px;color:#fff;letter-spacing:0.133px;font-weight:bold;left:50.40px;">Đóng</div>
<svg class="a" style="left:355px;top:727px;" width="24" height="24" viewBox="0 0 24 24" fill="none"><g stroke="#a4a6b1" stroke-width="1.6" fill="none" stroke-linecap="round" stroke-linejoin="round">
<path d="M22.36 12.85 A9.8 9.8 0 1 1 21.0 6.9"/><path d="M16.4 7 H22 V1.5"/></g></svg>
<div class="a " id="t52" style="top:731.74px;font-size:13.3px;color:#b3b4bc;letter-spacing:0.300px;font-weight:bold;left:387.20px;">Nạp</div>
<div class="a" style="left:438.5px;top:730px;width:1.5px;height:17px;background:#6b6d7a;"></div>
<svg class="a" style="left:464px;top:727px;" width="24" height="24" viewBox="0 0 24 24" fill="none"><circle cx="11.3" cy="12" r="10.1" stroke="#fff" stroke-width="1.7" fill="none"/>
<g fill="#fff"><rect x="10.3" y="7.8" width="2" height="2"/><rect x="10.3" y="11.1" width="2" height="2"/><rect x="10.3" y="14.4" width="2" height="2"/></g></svg>
<div class="a " id="t53" style="top:731.74px;font-size:13.3px;color:#fff;letter-spacing:-0.129px;font-weight:bold;left:496.40px;">Tiện ích</div>
<svg class="a" style="left:552px;top:736px;" width="10" height="6" viewBox="0 0 10 6" fill="none"><path d="M0 0 H9.5 L4.75 5.8 Z" fill="#fff"/></svg>
<div class="a" style="left:588.5px;top:730px;width:1.5px;height:17px;background:#6b6d7a;"></div>
<svg class="a" style="left:612px;top:727px;" width="24" height="24" viewBox="0 0 24 24" fill="none"><g stroke="#9d9ea9" stroke-width="1.6" fill="none" stroke-linejoin="round">
<path d="M6.2 7.8 V3.8 Q6.2 2.3 7.7 2.3 H18.5 Q20 2.3 20 3.8 V7.8"/>
<path d="M6 16 H4.7 Q2.7 16 2.7 14 V9.8 Q2.7 7.8 4.7 7.8 H20.5 Q22.5 7.8 22.5 9.8 V14 Q22.5 16 20.5 16 H20"/>
<path d="M4.6 13.9 H20.6"/>
<path d="M6.2 13.9 V20.5 Q6.2 22 7.7 22 H18.5 Q20 22 20 20.5 V13.9"/></g></svg>
<div class="a " id="t54" style="top:731.74px;font-size:13.3px;color:#a3a4ae;letter-spacing:0.400px;font-weight:bold;left:643.80px;">In</div>
<svg class="a" style="left:669px;top:736px;" width="10" height="6" viewBox="0 0 10 6" fill="none"><path d="M0 0 H9.5 L4.75 5.8 Z" fill="#a4a6b1"/></svg>
<div class="a" style="left:697.5px;top:730px;width:1.5px;height:17px;background:#6b6d7a;"></div>
<svg class="a" style="left:717px;top:728px;" width="20" height="23" viewBox="0 0 20 23" fill="none"><g stroke="#b4b5be" stroke-width="1.7" fill="none" stroke-linejoin="round" stroke-linecap="round">
<path d="M2.6 1 H11.9 L18.2 7.2 V19.4 Q18.2 21 16.6 21 H2.6 Q1 21 1 19.4 V2.6 Q1 1 2.6 1 Z"/><path d="M11.9 1 V7.2 H18.2"/>
<path d="M5.2 8 H8.8 M5.2 12 H14.8 M5.2 16 H14.8"/></g></svg>
<div class="a " id="t55" style="top:731.74px;font-size:13.3px;color:#b6b7bf;letter-spacing:0.175px;font-weight:bold;left:746.80px;">Duyệt</div>
<div class="a" style="left:810.5px;top:730px;width:1.5px;height:17px;background:#6b6d7a;"></div>
<svg class="a" style="left:829px;top:728px;" width="24" height="23" viewBox="0 0 24 23" fill="none"><g stroke="#b4b5be" stroke-width="1.6" fill="none" stroke-linejoin="round" stroke-linecap="round">
<path d="M1.1 5.4 H22.9"/><path d="M7.4 5.4 V2.6 Q7.4 1.5 8.5 1.5 H15.7 Q16.8 1.5 16.8 2.6 V5.4"/><path d="M5 7.8 L6.4 20.4 Q6.6 21.5 7.7 21.5 H16.3 Q17.4 21.5 17.6 20.4 L19.2 7.8"/><path d="M9.9 10.2 V16.8 M14.1 10.2 V16.8"/></g></svg>
<div class="a " id="t56" style="top:731.74px;font-size:13.3px;color:#b6b7bf;letter-spacing:-0.650px;font-weight:bold;left:862.40px;">Xóa</div>
<div class="a" style="left:1117px;top:726px;width:88px;height:26px;background:none;border:1px solid #fff;border-radius:4px"></div>
<div class="a " id="t57" style="top:731.74px;font-size:13.3px;color:#fff;letter-spacing:0.000px;font-weight:bold;left:1145.00px;">Hoãn</div>
<div class="a" style="left:1223px;top:726px;width:88px;height:26px;background:#5b5ce8;border-radius:4px"></div>
<div class="a " id="t58" style="top:731.74px;font-size:13.3px;color:#fff;letter-spacing:-0.200px;font-weight:bold;left:1256.00px;">Cất</div>
<div class="a" style="left:1px;top:1px;width:1332px;height:1px;background:#fff;"></div>
<div class="a" style="left:1px;top:1px;width:1px;height:714px;background:#fff;"></div>
<div class="a" style="left:0px;top:0px;width:1334px;height:1px;background:#4b4847;"></div>
<div class="a" style="left:0px;top:0px;width:1px;height:764px;background:#4b4847;"></div>
<div class="a" style="left:1333px;top:0px;width:1px;height:764px;background:#696664;"></div>
<div class="a" style="left:0px;top:763px;width:1334px;height:1px;background:#696664;"></div>
</body></html>
